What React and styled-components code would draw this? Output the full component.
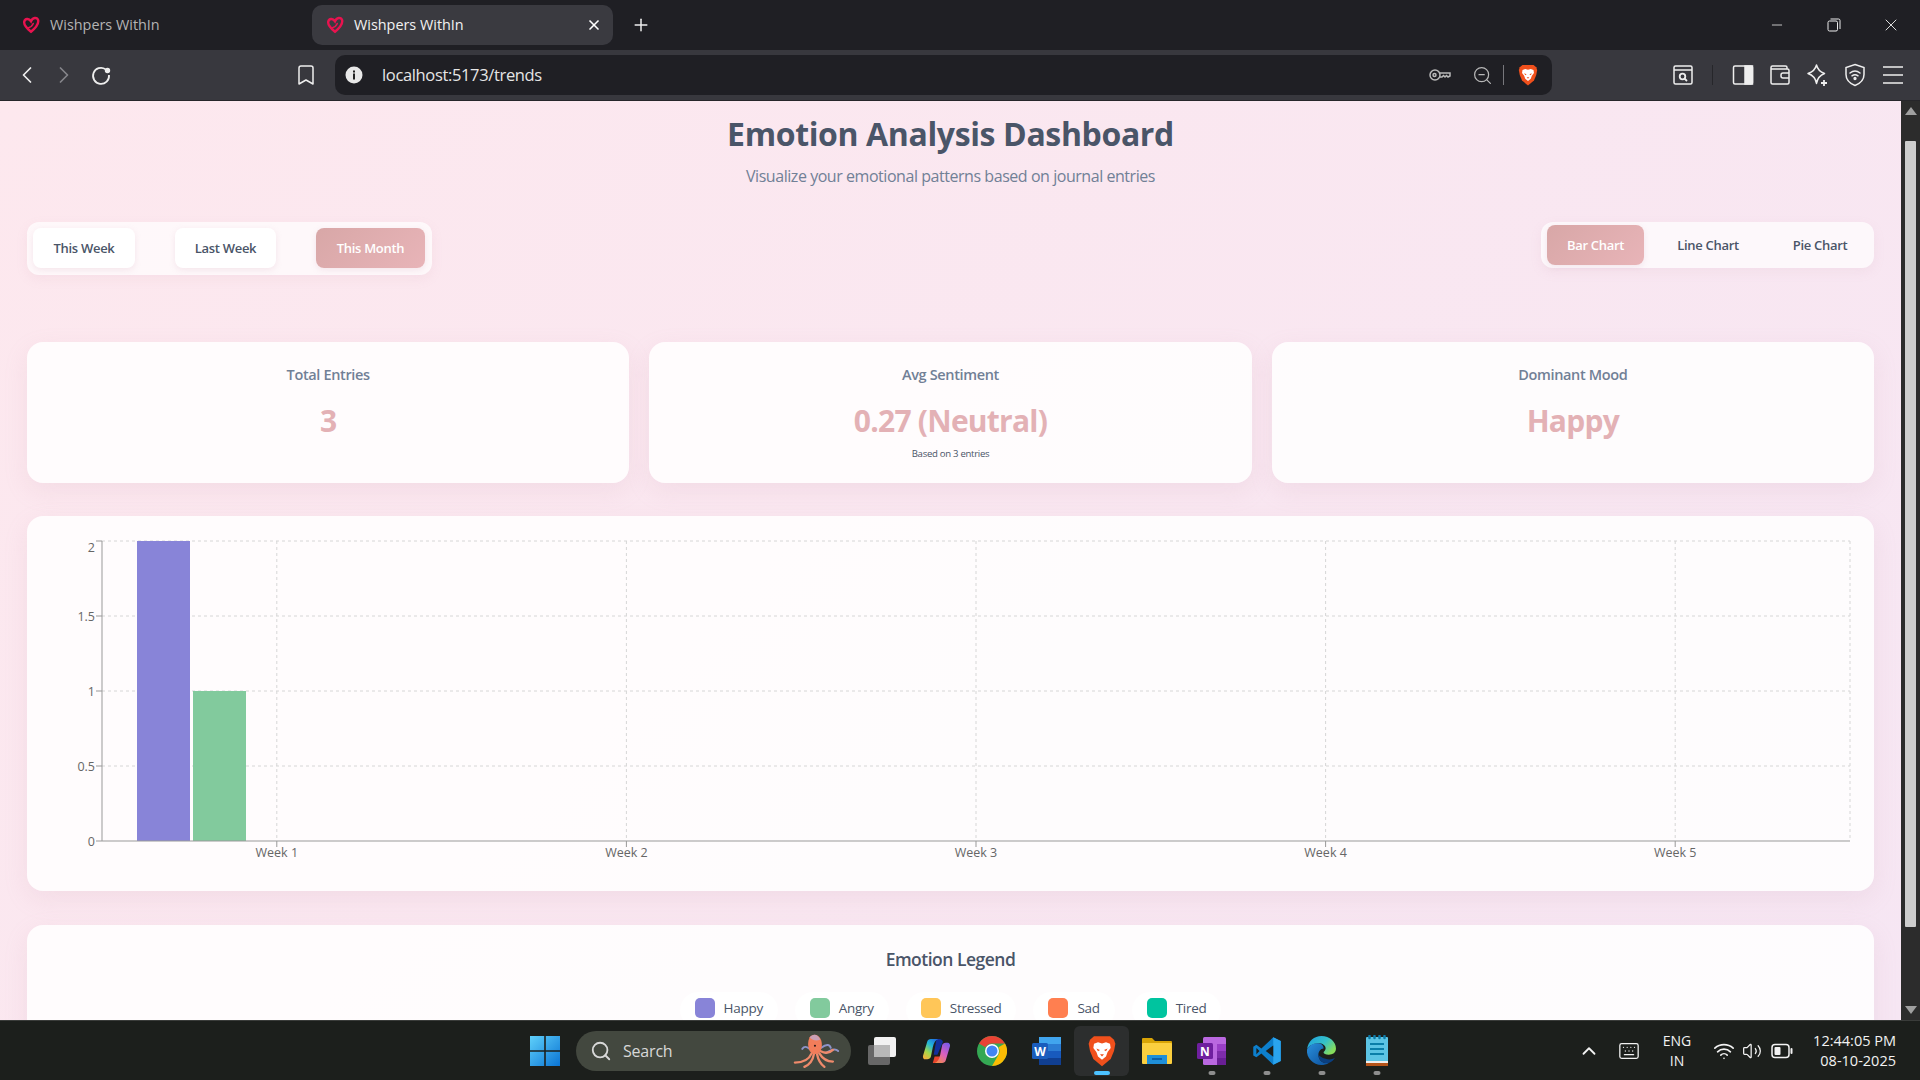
import styled, { createGlobalStyle } from "styled-components";
import { ChevronLeft, ChevronRight, Bookmark, X, Plus, Minus, ZoomOut, Search, Wifi, Volume2, ChevronUp, Keyboard } from "lucide-react";

const FONT = `"Open Sans", "Noto Sans", "Liberation Sans", sans-serif`;

const Global = createGlobalStyle`
  html, body { margin: 0; padding: 0; overflow: hidden; }
  body { font-family: ${FONT}; }
  * { box-sizing: border-box; }
`;

const Screen = styled.div`
  width: 1920px;
  height: 1080px;
  display: flex;
  flex-direction: column;
  overflow: hidden;
`;

/* browser chrome */
const TabBar = styled.div`
  height: 50px;
  flex: none;
  background: #1f1f24;
  display: flex;
  align-items: center;
  padding-left: 8px;
`;
const Tab = styled.div`
  width: ${(p) => (p.$active ? "301px" : "304px")};
  height: 40px;
  border-radius: 10px;
  background: ${(p) => (p.$active ? "#3a3a40" : "transparent")};
  color: ${(p) => (p.$active ? "#f2f2f2" : "#b4b4b4")};
  display: flex;
  align-items: center;
  gap: 10px;
  padding: 0 11px 2px 14px;
  font-size: 14.4px;
  svg { margin-top: 2px; }
  svg.close { margin-left: auto; color: #fff; }
`;
const NewTab = styled.div`
  margin-left: 18px;
  color: #eee;
  display: flex;
`;
const WindowControls = styled.div`
  margin-left: auto;
  display: flex;
  color: #eee;
  padding-right: 1px;
`;
const WinBtn = styled.div`
  width: 57px;
  height: 46px;
  display: flex;
  align-items: center;
  justify-content: center;
`;
const Toolbar = styled.div`
  height: 51px;
  flex: none;
  background: #38383e;
  border-bottom: 1px solid #26262a;
  display: flex;
  align-items: center;
  padding-left: 8px;
  color: #eee;
`;
const ToolBtn = styled.div`
  width: ${(p) => p.$w || 37}px;
  height: 40px;
  flex: none;
  display: flex;
  align-items: center;
  justify-content: center;
  color: ${(p) => p.$color || "#eee"};
`;
const BookmarkSlot = styled(ToolBtn)`
  width: 205px;
  justify-content: flex-end;
  padding-right: 6px;
`;
const Address = styled.div`
  width: 1217px;
  height: 40px;
  flex: none;
  margin-left: 11px;
  background: #1f1f24;
  border-radius: 10px;
  display: flex;
  align-items: center;
  padding-left: 4px;
`;
const Url = styled.div`
  color: #e6e6e6;
  font-size: 16.5px;
  letter-spacing: -0.35px;
  margin: -1px 0 0 13px;
`;
const AddressEnd = styled.div`
  margin-left: auto;
  display: flex;
  align-items: center;
  color: #b8b8b8;
`;
const ZoomSlot = styled(ToolBtn)`
  margin-left: 10px;
`;
const Divider = styled.div`
  width: 1px;
  height: 20px;
  background: ${(p) => p.$color || "#77777c"};
  margin: 0 ${(p) => p.$m || 0}px;
`;
const ToolEnd = styled.div`
  margin-left: auto;
  display: flex;
  align-items: center;
  padding-right: 9px;
`;

/* page */
const Viewport = styled.div`
  flex: 1;
  min-height: 0;
  display: flex;
`;
const Page = styled.main`
  flex: 1;
  min-width: 0;
  overflow: hidden;
  padding: 12px 27px 0;
  background: linear-gradient(135deg, #fde8ee 0%, #f6e6f3 100%);
`;
const Title = styled.h1`
  margin: 0;
  font-size: 32px;
  line-height: 42px;
  font-weight: 700;
  color: #4a5568;
  text-align: center;
  letter-spacing: -0.37px;
`;
const Subtitle = styled.p`
  margin: 10px 0 0;
  font-size: 16px;
  line-height: 22px;
  color: #718096;
  text-align: center;
  letter-spacing: -0.45px;
`;
const Controls = styled.div`
  margin-top: 35px;
  display: flex;
  justify-content: space-between;
  align-items: flex-start;
`;
const FilterGroup = styled.div`
  display: flex;
  gap: ${(p) => p.$gap}px;
  padding: ${(p) => p.$pad};
  background: rgba(255, 255, 255, 0.7);
  border-radius: 12px;
  box-shadow: 0 4px 12px rgba(200, 150, 170, 0.1);
`;
const Pill = styled.button`
  width: ${(p) => p.$w}px;
  height: 40px;
  padding: 0;
  border: 0;
  border-radius: 8px;
  font-family: ${FONT};
  font-size: 13px;
  font-weight: 600;
  letter-spacing: -0.3px;
  color: ${(p) => (p.$on ? "#fff" : "#4a5568")};
  background: ${(p) => (p.$on ? "linear-gradient(135deg, #d8a7a7, #e8b4b8)" : p.$flat ? "transparent" : "#fff")};
  box-shadow: ${(p) => (p.$flat && !p.$on ? "none" : "0 2px 6px rgba(200, 150, 170, 0.18)")};
`;
const Stats = styled.section`
  margin-top: 67px;
  display: grid;
  grid-template-columns: repeat(3, 1fr);
  gap: 20px;
`;
const Card = styled.div`
  background: rgba(255, 255, 255, 0.85);
  border-radius: 16px;
  box-shadow: 0 8px 24px rgba(200, 150, 170, 0.14);
`;
const StatCard = styled(Card)`
  height: 141px;
  padding-top: 22px;
  text-align: center;
`;
const StatLabel = styled.div`
  font-size: 14.5px;
  line-height: 22px;
  color: #718096;
  font-weight: 600;
  letter-spacing: -0.35px;
`;
const StatValue = styled.div`
  margin-top: 13px;
  font-size: 30px;
  line-height: 44px;
  font-weight: 700;
  color: #e3b1b5;
  letter-spacing: -0.75px;
`;
const StatNote = styled.div`
  margin-top: 4px;
  font-size: 9.6px;
  line-height: 14px;
  color: #4a5568;
  letter-spacing: -0.3px;
`;
const ChartCard = styled(Card)`
  margin-top: 33px;
  height: 375px;
  svg { display: block; }
  text { font-family: ${FONT}; font-size: 12.5px; fill: #666; }
`;
const LegendCard = styled(Card)`
  margin-top: 34px;
  height: 220px;
  padding-top: 22px;
`;
const LegendTitle = styled.h3`
  margin: 0;
  font-size: 17.5px;
  line-height: 24px;
  font-weight: 600;
  text-align: center;
  color: #4a5568;
  letter-spacing: -0.5px;
`;
const LegendRow = styled.div`
  margin-top: 21px;
  display: flex;
  justify-content: center;
  gap: 17px;
`;
const LegendItem = styled.div`
  height: 36px;
  padding: 6px 15px 0;
  border-radius: 18px;
  background: rgba(255, 255, 255, 0.8);
  display: flex;
  align-items: flex-start;
  gap: 9px;
  font-size: 13.5px;
  font-weight: 500;
  line-height: 20px;
  color: #4a5568;
  letter-spacing: -0.3px;
`;
const Swatch = styled.span`
  width: 20px;
  height: 20px;
  border-radius: 5px;
  background: ${(p) => p.$c};
`;

/* scrollbar */
const Scrollbar = styled.div`
  width: 19px;
  flex: none;
  background: #2c2c2c;
  display: flex;
  flex-direction: column;
  align-items: center;
`;
const Arrow = styled.div`
  height: 20px;
  flex: none;
  display: flex;
  align-items: center;
  justify-content: center;
  width: 100%;
  &::before {
    content: "";
    border-left: 6px solid transparent;
    border-right: 6px solid transparent;
    ${(p) => (p.$down ? "border-top" : "border-bottom")}: 8px solid #a0a0a0;
  }
`;
const Thumb = styled.div`
  width: 11px;
  height: 786px;
  margin-top: 20px;
  margin-bottom: auto;
  background: #cdcdcd;
  border-radius: 1px;
`;

/* taskbar */
const Taskbar = styled.footer`
  height: 60px;
  flex: none;
  background: #1c1f1c;
  border-top: 1px solid #3a3c3a;
  display: flex;
  align-items: center;
  padding-left: 517px;
  color: #f2f2f2;
`;
const Slot = styled.div`
  position: relative;
  width: 55px;
  height: 50px;
  flex: none;
  display: flex;
  align-items: center;
  justify-content: center;
  border-radius: 6px;
  background: ${(p) => (p.$active ? "#2c2e2e" : "transparent")};
  &::after {
    content: "";
    display: ${(p) => (p.$dot ? "block" : "none")};
    position: absolute;
    bottom: 1px;
    left: 50%;
    transform: translateX(-50%);
    height: 4px;
    border-radius: 2px;
    width: ${(p) => (p.$active ? "16px" : "7px")};
    background: ${(p) => (p.$active ? "#4cc2ff" : "#8e8e8e")};
  }
`;
const SearchBox = styled.div`
  width: 275px;
  height: 40px;
  flex: none;
  margin: 0 3px 0 4px;
  padding: 0 9px 0 14px;
  border-radius: 20px;
  background: #43483f;
  display: flex;
  align-items: center;
  gap: 11px;
  font-size: 16px;
  color: #d8d8d8;
  letter-spacing: -0.2px;
  svg:last-child { margin-left: auto; }
`;
const Tray = styled.div`
  margin-left: 167px;
  flex: 1;
  display: flex;
  align-items: center;
`;
const TrayIcon = styled.div`
  width: ${(p) => p.$w}px;
  margin-left: ${(p) => p.$ml || 0}px;
  flex: none;
  display: flex;
  align-items: center;
  justify-content: center;
`;
const Lang = styled.div`
  width: 52px;
  flex: none;
  text-align: center;
  font-size: 14px;
  line-height: 20px;
`;
const Clock = styled.div`
  margin-left: auto;
  padding-right: 24px;
  flex: none;
  white-space: nowrap;
  text-align: right;
  font-size: 14.5px;
  line-height: 20px;
`;

/* icons */
const Heart = () => (
  <svg width="18" height="18" viewBox="0 0 24 24" fill="none" stroke="#e8134f" strokeWidth="3.2" strokeLinecap="round">
    <path d="M12 21C6 16 2 12 3 7.500 4 3.500 9 2.500 12 7c2-5 8-6 9.500-1.500C22.500 10 18 16 12 21z" />
    <path d="M8 16c3-1 6-3 7-6" strokeWidth="2" />
  </svg>
);
const Reload = () => (
  <svg width="22" height="22" viewBox="0 0 22 22" fill="none" stroke="#eee" strokeWidth="1.800">
    <path d="M15.500 5.200A8 8 0 1 0 19 11" />
    <circle cx="17.500" cy="6.500" r="1.800" fill="#eee" />
  </svg>
);
const InfoDot = () => (
  <svg width="18" height="18" viewBox="0 0 18 18">
    <circle cx="9" cy="9" r="8.500" fill="#e8e8e8" />
    <rect x="8" y="7.500" width="2" height="6" fill="#222" />
    <rect x="8" y="4.500" width="2" height="2" fill="#222" />
  </svg>
);
const KeyIcon = () => (
  <svg width="22" height="14" viewBox="0 0 22 14" fill="none" stroke="#b8b8b8" strokeWidth="1.500">
    <circle cx="6" cy="7" r="5" />
    <circle cx="5.500" cy="7" r="1.500" />
    <path d="M11 5h10v3l-2 1-1.500-1.500L16 9l-1.500-1.500L13 9h-2" />
  </svg>
);
const Brave = ({ size = 22 }) => (
  <svg width={size} height={size} viewBox="0 0 24 24">
    <path d="M6 1h12l3 2.500 1 3-1 5.500-2.500 6L12 23.500l-6.500-5.500L3 12 2 6.500l1-3z" fill="#f0501c" />
    <path d="M6 6.500 9 5.500 12 6.300l3-.8 3 1 .5 3.200-2.300 3-1.200 3.500-3 2.300-3-2.300-1.200-3.500-2.300-3z" fill="#fff" />
    <path d="M7.800 10.200l2.700 1-1.500 1zM16.200 10.200l-2.700 1 1.500 1zM10.500 14.500h3L12 16.200z" fill="#f0501c" />
  </svg>
);
const ScreenshotIcon = () => (
  <svg width="22" height="22" viewBox="0 0 22 22" fill="none" stroke="#eee" strokeWidth="1.500">
    <rect x="2" y="2" width="18" height="18" rx="1.500" />
    <path d="M2 6h18" />
    <circle cx="10.500" cy="12.500" r="2.800" strokeWidth="1.800" />
    <path d="M12.500 14.500l2.500 2.500" strokeWidth="1.800" />
  </svg>
);
const SidebarIcon = () => (
  <svg width="22" height="22" viewBox="0 0 22 22" fill="none" stroke="#eee" strokeWidth="1.500">
    <rect x="1.500" y="2" width="19" height="18" rx="1.500" />
    <rect x="13" y="2" width="7.500" height="18" fill="#eee" />
  </svg>
);
const WalletIcon = () => (
  <svg width="22" height="22" viewBox="0 0 22 22" fill="none" stroke="#eee" strokeWidth="1.500">
    <path d="M18 5V3.500A1.500 1.500 0 0 0 16.500 2H3.500A1.500 1.500 0 0 0 2 3.500v15A1.500 1.500 0 0 0 3.500 20h15a1.500 1.500 0 0 0 1.500-1.500v-12A1.500 1.500 0 0 0 18.500 5H2" />
    <path d="M20 9h-6a2 2 0 0 0-2 2v1a2 2 0 0 0 2 2h6" />
  </svg>
);
const StarIcon = () => (
  <svg width="24" height="24" viewBox="0 0 24 24" fill="none" stroke="#eee" strokeWidth="1.500" strokeLinejoin="round">
    <path d="M10.500 2c1 4 3.500 7 8 8.500-4 1.500-7 4-8 10-1-6-4-8.500-8.500-10 4.500-1.500 7.500-4.500 8.500-8.500z" />
    <path d="M18 17v6M15 20h6" strokeWidth="1.800" />
  </svg>
);
const VpnIcon = () => (
  <svg width="22" height="24" viewBox="0 0 22 24" fill="none" stroke="#eee" strokeWidth="1.500" strokeLinecap="round">
    <path d="M11 1.500l9 3v7c0 5-4 9-9 11-5-2-9-6-9-11v-7z" />
    <path d="M6 10c3-2.500 7-2.500 10 0M8 12.800c2-1.500 4-1.500 6 0" />
    <circle cx="11" cy="15.500" r=".9" fill="#eee" />
  </svg>
);
const MenuIcon = () => (
  <svg width="22" height="20" viewBox="0 0 22 20" stroke="#eee" strokeWidth="1.600">
    <path d="M1 2h20M1 10h20M1 18h20" />
  </svg>
);
const RestoreIcon = () => (
  <svg width="14" height="14" viewBox="0 0 14 14" fill="none" stroke="#eee" strokeWidth="1">
    <rect x="1" y="3" width="9.500" height="10" rx="1.500" />
    <path d="M3.500 1h8A1.500 1.500 0 0 1 13 2.500V11" />
  </svg>
);
const WindowsLogo = () => (
  <svg width="30" height="30" viewBox="0 0 30 30">
    <defs>
      <linearGradient id="win" x1="0" y1="0" x2="1" y2="1">
        <stop offset="0" stopColor="#5fd0fa" />
        <stop offset="1" stopColor="#0a74d4" />
      </linearGradient>
    </defs>
    <path d="M0 0h14.200v14.200H0zM15.800 0H30v14.200H15.800zM0 15.800h14.200V30H0zM15.800 15.800H30V30H15.800z" fill="url(#win)" />
  </svg>
);
const Octopus = () => (
  <svg width="52" height="38" viewBox="0 0 48 36" fill="none" strokeLinecap="round">
    <g stroke="#8d93c9" strokeWidth="1.800">
      <path d="M29 15c5-4 8-3 9 0M33 20c5-3 9-5 12-2" />
      <path d="M18 16c-3-2-5-3-7 0" />
    </g>
    <g stroke="#ef8a6b" strokeWidth="2.200">
      <path d="M20 20c-3 7-9 9-16 9" />
      <path d="M22 21c-1 6-4 10-9 12" />
      <path d="M25 21c1 5 3 9 7 12" />
      <path d="M27 20c3 5 7 8 13 8" />
      <path d="M28 18c4 2 8 3 12-1" />
    </g>
    <path d="M18 5c3-4 9-3 11 3 1 4 1 9-3 12-3 2-6 1-8-2-2-4-2-9 0-13z" fill="#f27d5a" />
    <path d="M18 5c3-4 8-3 10 2-3 2-8 1-10-2z" fill="#c99fb5" />
    <circle cx="23" cy="13" r="1" fill="#2b1a1a" />
  </svg>
);
const TaskView = () => (
  <svg width="30" height="30" viewBox="0 0 30 30">
    <rect x="7" y="1" width="22" height="20" rx="2" fill="#f2f2f2" />
    <rect x="1" y="9" width="22" height="20" rx="2" fill="#6e6e6e" opacity=".92" />
    <rect x="7" y="9" width="16" height="12" fill="#b8b8b8" />
  </svg>
);
const Copilot = () => (
  <svg width="29" height="26" viewBox="0 0 30 28">
    <defs>
      <linearGradient id="cpA" x1="0.8" y1="0" x2="0.2" y2="1">
        <stop offset="0" stopColor="#1f6fe0" />
        <stop offset=".35" stopColor="#22b8d8" />
        <stop offset=".7" stopColor="#a4d84a" />
        <stop offset="1" stopColor="#f4b23c" />
      </linearGradient>
      <linearGradient id="cpB" x1="0.8" y1="0" x2="0.2" y2="1">
        <stop offset="0" stopColor="#7a5ae8" />
        <stop offset=".5" stopColor="#d95fc0" />
        <stop offset="1" stopColor="#f58a4a" />
      </linearGradient>
    </defs>
    <path d="M15 1h3c2 0 3 1 4 3l-6 14H12z" fill="#12309c" />
    <path d="M11 27h7c2 0 3-1 4-3l-3-4h-6z" fill="#e8452c" />
    <path d="M9 1h8c-3 1-5 4-6 9l-2 10c-.5 2-2 3-4 3H3c-2 0-3-2-2.500-4L5 4c.5-2 2-3 4-3z" fill="url(#cpA)" />
    <path d="M21 27h-8c3-1 5-4 6-9l2-10c.5-2 2-3 4-3h2c2 0 3 2 2.500 4L25 24c-.5 2-2 3-4 3z" fill="url(#cpB)" />
  </svg>
);
const Chrome = () => (
  <svg width="30" height="30" viewBox="0 0 30 30">
    <circle cx="15" cy="15" r="15" fill="#34a853" />
    <path d="M15 0a15 15 0 0 1 13 7.500H15a7.500 7.500 0 0 0-6.500 3.750L2 7.500A15 15 0 0 1 15 0z" fill="#ea4335" />
    <path d="M28 7.500A15 15 0 0 1 15 30l6.500-11.250A7.500 7.500 0 0 0 21.500 11.250z" fill="#fbbc04" />
    <circle cx="15" cy="15" r="7" fill="#fff" />
    <circle cx="15" cy="15" r="5.500" fill="#4285f4" />
  </svg>
);
const OfficeTile = styled.svg`
  text { font-family: ${FONT}; font-size: 12px; font-weight: 700; fill: #fff; }
`;
const Word = () => (
  <OfficeTile width="30" height="30" viewBox="0 0 30 30">
    <rect x="7" y="1" width="22" height="7" fill="#41a5ee" />
    <rect x="7" y="8" width="22" height="7" fill="#2b7cd3" />
    <rect x="7" y="15" width="22" height="7" fill="#185abd" />
    <rect x="7" y="22" width="22" height="7" fill="#103f91" />
    <rect x="0" y="7" width="16" height="16" rx="1.500" fill="#1a5dbd" />
    <text x="8" y="19.500" textAnchor="middle">W</text>
  </OfficeTile>
);
const Explorer = () => (
  <svg width="30" height="30" viewBox="0 0 30 30">
    <path d="M0 3a1 1 0 0 1 1-1h9l3 3h16a1 1 0 0 1 1 1v4H0z" fill="#d9a406" />
    <rect x="0" y="7" width="30" height="21" rx="1" fill="#fbcf3f" />
    <rect x="5" y="19" width="20" height="9" fill="#1f8fd8" />
    <rect x="10" y="22" width="10" height="2" fill="#0d5fa8" />
  </svg>
);
const OneNote = () => (
  <OfficeTile width="30" height="30" viewBox="0 0 30 30">
    <rect x="6" y="1" width="23" height="28" rx="1.500" fill="#ba68e0" />
    <rect x="20" y="8" width="9" height="7" fill="#9a3fc7" />
    <rect x="20" y="15" width="9" height="7" fill="#7e2cab" />
    <rect x="20" y="22" width="9" height="7" fill="#6a1f96" />
    <rect x="0" y="7" width="16" height="16" rx="1.500" fill="#6f1f9f" />
    <text x="8" y="19.500" textAnchor="middle">N</text>
  </OfficeTile>
);
const VSCode = () => (
  <svg width="30" height="30" viewBox="0 0 24 24">
    <path d="M17 1l6 3v16l-6 3L7.500 14l-4 3L1 15.500v-7L3.500 7l4 3z" fill="#0d7fcc" />
    <path d="M17 1l6 3v16l-6 3z" fill="#2aa4ee" />
    <path d="M17 7.500L11 12l6 4.500z" fill="#1c1f1c" />
    <path d="M3.500 9.500v5L6 12z" fill="#1c1f1c" />
  </svg>
);
const Edge = () => (
  <svg width="31" height="31" viewBox="0 0 30 30">
    <defs>
      <linearGradient id="edA" x1="0" y1="0" x2="1" y2=".6">
        <stop offset="0" stopColor="#1e9fe0" />
        <stop offset=".6" stopColor="#35c1c8" />
        <stop offset="1" stopColor="#86dc5c" />
      </linearGradient>
      <linearGradient id="edB" x1="0" y1="0" x2="1" y2="1">
        <stop offset="0" stopColor="#2a8fdc" />
        <stop offset="1" stopColor="#0b4f9a" />
      </linearGradient>
    </defs>
    <path d="M1 14C2 6 8 1 15 1c8 0 14 6 14 12 0 4-3 6-7 6-3 0-5-1-5-2 0-1 2-2 2-4 0-3-3-5-7-5C7 8 2 11 1 14z" fill="url(#edA)" />
    <path d="M1 14c2-4 6-6 10-6 4 0 6 2 6 5-3 0-5 3-5 6 0 5 4 9 10 8-2 1.500-5 2-7 2C7 29 0 22 1 14z" fill="url(#edB)" />
    <path d="M12 19c0 5 4 9 10 8 3-1 5-3 6-5-3 2-6 2-9 1-4-1-6-3-7-4z" fill="#0a3f80" />
  </svg>
);
const Notepad = () => (
  <svg width="22" height="31" viewBox="0 0 22 31">
    <rect x="0" y="2" width="22" height="28" rx="1" fill="#5cc4e4" />
    <rect x="0" y="26" width="22" height="2" fill="#eee" />
    <rect x="0" y="28" width="22" height="3" fill="#b5541a" />
    <path d="M3.500 3V1M8.500 3V1M13.500 3V1M18.500 3V1" stroke="#0d7ba8" strokeWidth="2.500" strokeLinecap="round" />
    <path d="M4 9h14M4 14h14M4 19h14" stroke="#0a7ea8" strokeWidth="2.200" />
  </svg>
);
const Battery = () => (
  <svg width="22" height="16" viewBox="0 0 22 16" fill="none" stroke="#f2f2f2" strokeWidth="1.500">
    <rect x="1" y="1.500" width="17" height="13" rx="3" />
    <rect x="3.500" y="4" width="6" height="8" rx="1" fill="#f2f2f2" stroke="none" />
    <path d="M20.500 6v4" strokeWidth="2" strokeLinecap="round" />
  </svg>
);

/* chart, recharts-looking */
const PLOT = { left: 75, right: 1823, top: 25, bottom: 325 };
const BAND = (PLOT.right - PLOT.left) / 5;
const yTicks = [
  { label: "2", y: 25, textY: 36 },
  { label: "1.5", y: 100, textY: 105 },
  { label: "1", y: 175, textY: 180 },
  { label: "0.5", y: 250, textY: 255 },
  { label: "0", y: 325, textY: 330 },
];
const weeks = ["Week 1", "Week 2", "Week 3", "Week 4", "Week 5"];

function BarChart() {
  return (
    <svg width="1847" height="375" viewBox="0 0 1847 375">
      <g stroke="#d6d6d6" strokeDasharray="3 3" fill="none">
        {yTicks.slice(0, 4).map((t) => (
          <line key={t.label} x1={PLOT.left} x2={PLOT.right} y1={t.y} y2={t.y} />
        ))}
        {weeks.map((w, i) => (
          <line key={w} x1={PLOT.left + BAND * (i + 0.5)} x2={PLOT.left + BAND * (i + 0.5)} y1={PLOT.top} y2={PLOT.bottom} />
        ))}
        <line x1={PLOT.right} x2={PLOT.right} y1={PLOT.top} y2={PLOT.bottom} />
      </g>
      <rect x="110" y="25" width="53" height="300" fill="#8884d8" />
      <rect x="166" y="175" width="53" height="150" fill="#82ca9d" />
      <g stroke="#999" fill="none">
        <line x1={PLOT.left} x2={PLOT.left} y1={PLOT.top} y2={PLOT.bottom} />
        <line x1={PLOT.left} x2={PLOT.right} y1={PLOT.bottom} y2={PLOT.bottom} />
        {yTicks.map((t) => (
          <line key={t.label} x1={PLOT.left - 6} x2={PLOT.left} y1={t.y} y2={t.y} />
        ))}
        {weeks.map((w, i) => (
          <line key={w} x1={PLOT.left + BAND * (i + 0.5)} x2={PLOT.left + BAND * (i + 0.5)} y1={PLOT.bottom} y2={PLOT.bottom + 6} />
        ))}
      </g>
      {yTicks.map((t) => (
        <text key={t.label} x={PLOT.left - 7} y={t.textY} textAnchor="end">{t.label}</text>
      ))}
      {weeks.map((w, i) => (
        <text key={w} x={PLOT.left + BAND * (i + 0.5)} y={341} textAnchor="middle">{w}</text>
      ))}
    </svg>
  );
}

const legend = [
  ["Happy", "#8884d8"],
  ["Angry", "#82ca9d"],
  ["Stressed", "#ffc658"],
  ["Sad", "#ff7f50"],
  ["Tired", "#00c49f"],
];

export default function App() {
  return (
    <Screen>
      <Global />
      <TabBar>
        <Tab>
          <Heart />
          Wishpers WithIn
        </Tab>
        <Tab $active>
          <Heart />
          Wishpers WithIn
          <X className="close" size={16} strokeWidth={2.5} />
        </Tab>
        <NewTab>
          <Plus size={20} strokeWidth={1.8} />
        </NewTab>
        <WindowControls>
          <WinBtn><Minus size={16} strokeWidth={1.2} /></WinBtn>
          <WinBtn><RestoreIcon /></WinBtn>
          <WinBtn><X size={20} strokeWidth={1.1} /></WinBtn>
        </WindowControls>
      </TabBar>

      <Toolbar>
        <ToolBtn><ChevronLeft size={28} strokeWidth={1.5} /></ToolBtn>
        <ToolBtn $color="#85858a"><ChevronRight size={28} strokeWidth={1.5} /></ToolBtn>
        <ToolBtn><Reload /></ToolBtn>
        <BookmarkSlot><Bookmark size={24} strokeWidth={1.5} /></BookmarkSlot>
        <Address>
          <ToolBtn $w={30}><InfoDot /></ToolBtn>
          <Url>localhost:5173/trends</Url>
          <AddressEnd>
            <KeyIcon />
            <ZoomSlot $w={42} $color="#b8b8b8"><ZoomOut size={21} strokeWidth={1.4} /></ZoomSlot>
            <Divider />
            <ToolBtn $w={48}><Brave /></ToolBtn>
          </AddressEnd>
        </Address>
        <ToolEnd>
          <ToolBtn $w={37}><ScreenshotIcon /></ToolBtn>
          <Divider $color="#26262a" $m={11} />
          <ToolBtn $w={37.5}><SidebarIcon /></ToolBtn>
          <ToolBtn $w={37.5}><WalletIcon /></ToolBtn>
          <ToolBtn $w={37.5}><StarIcon /></ToolBtn>
          <ToolBtn $w={37.5}><VpnIcon /></ToolBtn>
          <ToolBtn $w={37}><MenuIcon /></ToolBtn>
        </ToolEnd>
      </Toolbar>

      <Viewport>
        <Page>
          <Title>Emotion Analysis Dashboard</Title>
          <Subtitle>Visualize your emotional patterns based on journal entries</Subtitle>
          <Controls>
            <FilterGroup $gap={40} $pad="6px 7px 7px 6px">
              <Pill $w={102}>This Week</Pill>
              <Pill $w={101}>Last Week</Pill>
              <Pill $w={109} $on>This Month</Pill>
            </FilterGroup>
            <FilterGroup $gap={13} $pad="3px 6px">
              <Pill $w={97} $flat $on>Bar Chart</Pill>
              <Pill $w={102} $flat>Line Chart</Pill>
              <Pill $w={96} $flat>Pie Chart</Pill>
            </FilterGroup>
          </Controls>

          <Stats>
            <StatCard>
              <StatLabel>Total Entries</StatLabel>
              <StatValue>3</StatValue>
            </StatCard>
            <StatCard>
              <StatLabel>Avg Sentiment</StatLabel>
              <StatValue>0.27 (Neutral)</StatValue>
              <StatNote>Based on 3 entries</StatNote>
            </StatCard>
            <StatCard>
              <StatLabel>Dominant Mood</StatLabel>
              <StatValue>Happy</StatValue>
            </StatCard>
          </Stats>

          <ChartCard>
            <BarChart />
          </ChartCard>

          <LegendCard>
            <LegendTitle>Emotion Legend</LegendTitle>
            <LegendRow>
              {legend.map(([name, color]) => (
                <LegendItem key={name}>
                  <Swatch $c={color} />
                  {name}
                </LegendItem>
              ))}
            </LegendRow>
          </LegendCard>
        </Page>
        <Scrollbar>
          <Arrow />
          <Thumb />
          <Arrow $down />
        </Scrollbar>
      </Viewport>

      <Taskbar>
        <Slot><WindowsLogo /></Slot>
        <SearchBox>
          <Search size={22} strokeWidth={2} />
          Search
          <Octopus />
        </SearchBox>
        <Slot><TaskView /></Slot>
        <Slot><Copilot /></Slot>
        <Slot><Chrome /></Slot>
        <Slot><Word /></Slot>
        <Slot $active $dot><Brave size={32} /></Slot>
        <Slot><Explorer /></Slot>
        <Slot $dot><OneNote /></Slot>
        <Slot $dot><VSCode /></Slot>
        <Slot $dot><Edge /></Slot>
        <Slot $dot><Notepad /></Slot>
        <Tray>
          <TrayIcon $w={36}><ChevronUp size={22} strokeWidth={2} /></TrayIcon>
          <TrayIcon $w={44}><Keyboard size={22} strokeWidth={1.4} /></TrayIcon>
          <Lang>ENG<br />IN</Lang>
          <TrayIcon $w={28} $ml={7}><Wifi size={22} strokeWidth={1.8} /></TrayIcon>
          <TrayIcon $w={28}><Volume2 size={20} strokeWidth={1.5} /></TrayIcon>
          <TrayIcon $w={28} $ml={2}><Battery /></TrayIcon>
          <Clock>12:44:05 PM<br />08-10-2025</Clock>
        </Tray>
      </Taskbar>
    </Screen>
  );
}
